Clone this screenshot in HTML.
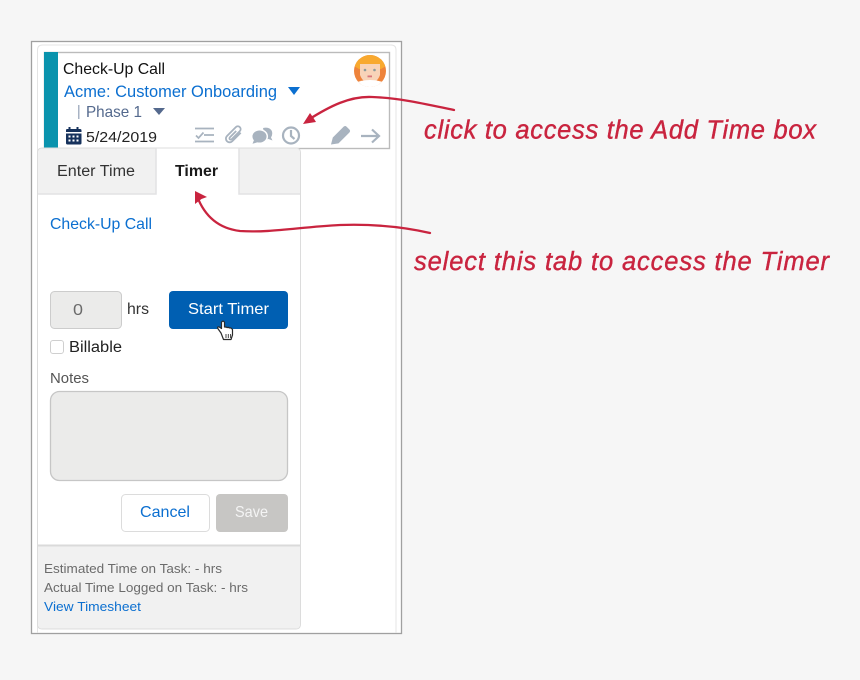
<!DOCTYPE html>
<html><head><meta charset="utf-8"><style>
html,body{margin:0;padding:0;width:860px;height:680px;overflow:hidden;background:#f6f6f6}
svg{display:block}
text{font-family:"Liberation Sans",sans-serif}
</style></head><body>
<svg width="860" height="680" viewBox="0 0 860 680" xmlns="http://www.w3.org/2000/svg">
<rect width="860" height="680" fill="#f6f6f6"/>
<rect x="31.500" y="41.500" width="370" height="592" fill="#fff" stroke="#a0a0a0" stroke-width="1.300"/>
<path d="M37.500 633V50q0-5 5-5H391q5 0 5 5V633" fill="none" stroke="#e4e4e4"/>
<!-- card -->
<rect x="44.500" y="52.500" width="345" height="96" fill="#fff" stroke="#bbbbbb" stroke-width="1.400"/>
<rect x="44" y="52" width="14" height="97" fill="#0a93ad"/>
<text x="63" y="74" font-size="16" fill="#111" textLength="102" lengthAdjust="spacingAndGlyphs">Check-Up Call</text>
<text x="64" y="97" font-size="17" fill="#0b6fd0" textLength="213" lengthAdjust="spacingAndGlyphs">Acme: Customer Onboarding</text>
<path d="M288 87h12l-6 8z" fill="#0b6fd0"/>
<rect x="78" y="105" width="1.500" height="14" fill="#a8b3c4"/>
<text x="86" y="117" font-size="16" fill="#54698d" textLength="56" lengthAdjust="spacingAndGlyphs">Phase 1</text>
<path d="M153 108h12l-6 7z" fill="#54698d"/>
<!-- calendar -->
<path d="M66 132h15.500v-1.500q0-1.500-1.500-1.500h-1.500v-2h-2v2h-6v-2h-2v2h-1.500q-1 0-1 1.500z" fill="#16325c"/>
<path fill-rule="evenodd" d="M66 133.500h15.500V143q0 1.500-1.500 1.500H67.500q-1.500 0-1.500-1.500zM68.500 135.500v2h2v-2zM72.500 135.500v2h2v-2zM76.500 135.500v2h2v-2zM68.500 139.500v2h2v-2zM72.500 139.500v2h2v-2zM76.500 139.500v2h2v-2z" fill="#16325c"/>
<text x="86" y="142" font-size="14.500" fill="#222" textLength="71" lengthAdjust="spacingAndGlyphs">5/24/2019</text>
<!-- action icons -->
<g fill="none" stroke="#a8b3bf" stroke-width="1.800">
<path d="M195 128.500h19M204 135h10M195 141.500h19"/>
<path d="M196 135.500l2.500 2.500 5-5.500" stroke-width="1.700"/>
<path d="M3.500-6V6a3.700 3.700 0 0 1-7.400 0V-6.500a2.800 2.800 0 0 1 5.600 0V5a1.300 1.300 0 0 1-2.600 0V-4" stroke-width="1.800" transform="translate(234 134.500) rotate(45)"/>
<circle cx="291" cy="135.500" r="8" stroke-width="2.200"/>
<path d="M291 130v6l3.500 3" stroke-width="2.200"/>
<path d="M361 136h18M372 129.500l7 6.500-7 6.500" stroke-width="2.200"/>
</g>
<g fill="#a8b3bf">
<path d="M263 128q7-1.500 9 3.500 .8 3.500-1 6l1.500 3-4-1.500q-2 .5-3 0z"/>
<g stroke="#fff" stroke-width="1.500"><ellipse cx="259.500" cy="136.500" rx="7.800" ry="6.800"/></g>
<path d="M254 140l-1.500 3.800 5-1.500z"/>
<path d="M331 144.500l1.800-7 10.700-10.700q1.500-1.500 3-.2l3 3q1.300 1.500-.2 3l-10.800 10.800z"/>
</g>
<!-- avatar -->
<defs><clipPath id="av"><circle cx="370" cy="71" r="16"/></clipPath></defs>
<g clip-path="url(#av)">
<rect x="354" y="55" width="32" height="32" fill="#ee833b"/>
<path d="M354 66q4-11 16-11t16 11l-5 3H359z" fill="#f8a92f"/>
<path d="M360 64h20v11q-3 8-10 8t-10-8z" fill="#f8d3b8"/>
<path d="M354 87v-4q8-3 16-3t16 3v4z" fill="#fff"/>
<rect x="361" y="81" width="18" height="6" fill="#fff"/>
<circle cx="365" cy="70" r="1.300" fill="#8a9a9a"/><circle cx="374.500" cy="70" r="1.300" fill="#8a9a9a"/>
<rect x="367.500" y="75.500" width="4.500" height="1.800" fill="#d8767a"/>
</g>
<!-- tab panel -->
<path d="M37.500 153q0-5 5-5H295.500q5 0 5 5V624q0 5-5 5H42.500q-5 0-5-5z" fill="#fff" stroke="#dcdcdc"/>
<path d="M38 193.500V153q0-4.500 4.500-4.500H156V193.500z" fill="#f1f1f1"/>
<path d="M239 148.500H295.500q4.500 0 4.500 4.500V193.500H239z" fill="#f1f1f1"/>
<path d="M38 194H156V148M239 148V194H300" fill="none" stroke="#e2e2e4" stroke-width="1.500"/>
<text x="57" y="176" font-size="15.500" fill="#333" textLength="78" lengthAdjust="spacingAndGlyphs">Enter Time</text>
<text x="175" y="176" font-size="16" font-weight="700" fill="#1a1a1a" textLength="43" lengthAdjust="spacingAndGlyphs">Timer</text>
<text x="50" y="229" font-size="16" fill="#0b6fd0" textLength="102" lengthAdjust="spacingAndGlyphs">Check-Up Call</text>
<!-- form -->
<rect x="50.500" y="291.500" width="71" height="37" rx="4" fill="#ebebea" stroke="#cccccc"/>
<text x="73" y="315" font-size="16" fill="#6b6b6b" textLength="10" lengthAdjust="spacingAndGlyphs">0</text>
<text x="127" y="314" font-size="15.500" fill="#333" textLength="22" lengthAdjust="spacingAndGlyphs">hrs</text>
<rect x="169" y="291" width="119" height="38" rx="4" fill="#005fb2"/>
<text x="188" y="314" font-size="16" fill="#fff" textLength="81" lengthAdjust="spacingAndGlyphs">Start Timer</text>
<rect x="50.500" y="340.500" width="13" height="13" rx="2.500" fill="#fff" stroke="#cfcfcf"/>
<text x="69" y="352" font-size="15.500" fill="#222" textLength="53" lengthAdjust="spacingAndGlyphs">Billable</text>
<text x="50" y="383" font-size="14.500" fill="#555" textLength="39" lengthAdjust="spacingAndGlyphs">Notes</text>
<rect x="50.500" y="391.500" width="237" height="89" rx="9" fill="#ebebea" stroke="#c6c6c6" stroke-width="1.300"/>
<!-- cursor -->
<path d="M221 333l-3.200-4.500q-.6-1.700 1-1.700l2.700 1.700V322.200q1.500-2.200 3 0V327l2 .1.300 .4 2-.1.400 .5 1.800 .1 1.500 1.500v5.500l-1.500 4.500h-7.500z" fill="#fff" stroke="#2a2a2a" stroke-width="1.200" stroke-linejoin="round"/>
<path d="M226 334v4M228.300 334v4M230.600 334v4" stroke="#333" stroke-width=".9"/>
<!-- buttons -->
<rect x="121.500" y="494.500" width="88" height="37" rx="4" fill="#fff" stroke="#dcdcdc"/>
<text x="140" y="517" font-size="16" fill="#0b6fd0" textLength="50" lengthAdjust="spacingAndGlyphs">Cancel</text>
<rect x="216" y="494" width="72" height="38" rx="4" fill="#c7c6c4"/>
<text x="235" y="517" font-size="16" fill="#f4f4f4" textLength="33" lengthAdjust="spacingAndGlyphs">Save</text>
<!-- footer -->
<path d="M38 545.500H300V624q0 4.500-4.500 4.500H42.500q-4.500 0-4.500-4.500z" fill="#f1f1f1"/>
<rect x="38" y="544.500" width="262" height="2" fill="#dadada"/>
<text x="44" y="573" font-size="13" fill="#6b6b6b" textLength="178" lengthAdjust="spacingAndGlyphs">Estimated Time on Task: - hrs</text>
<text x="44" y="592" font-size="13" fill="#6b6b6b" textLength="204" lengthAdjust="spacingAndGlyphs">Actual Time Logged on Task: - hrs</text>
<text x="44" y="611" font-size="13" fill="#0b6fd0" textLength="97" lengthAdjust="spacingAndGlyphs">View Timesheet</text>
<!-- arrows -->
<g fill="none" stroke="#c9243f" stroke-width="2.300" stroke-linecap="round">
<path d="M454 110C425 104 400 98 372 97C350 96 330 106 308 120"/>
<path d="M430 233C400 226 370 224 340 225C300 227 270 233 240 231C215 228 203 212 197 196"/>
</g>
<path d="M303 124l7-11 3.500 5 2.500 4z" fill="#c9243f"/>
<path d="M195 191l12 6-5.500 2-6.500 5z" fill="#c9243f"/>
<!-- annotations -->
<g fill="#c9243f" stroke="#c9243f" stroke-width=".4" font-size="25.500" font-style="italic">
<text x="424" y="138.500" textLength="392" lengthAdjust="spacing">click to access the Add Time box</text>
<text x="414" y="270" textLength="415" lengthAdjust="spacing">select this tab to access the Timer</text>
</g>
</svg>
</body></html>
